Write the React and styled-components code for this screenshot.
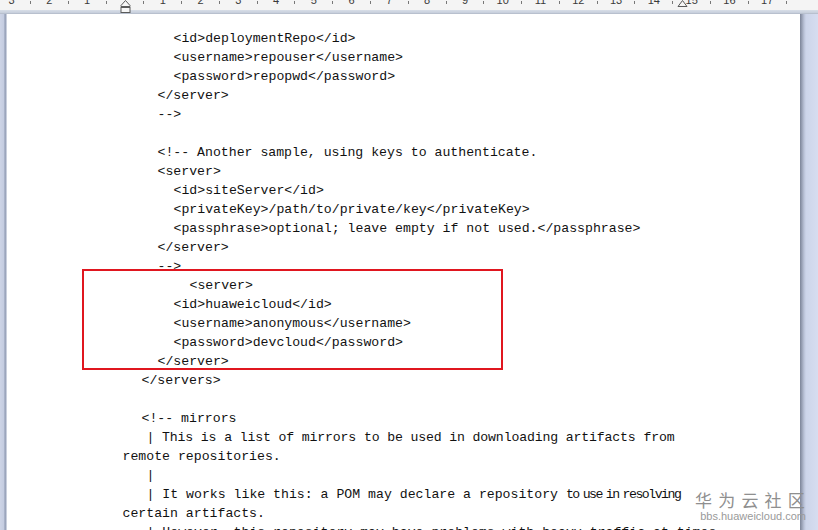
import React from "react";
import styled, { createGlobalStyle } from "styled-components";

const GlobalStyle = createGlobalStyle`
  html, body { margin: 0; padding: 0; background: #d3daec; }
  #root { width: 818px; height: 530px; }
`;

const Window = styled.div`
  position: relative;
  width: 818px;
  height: 530px;
  overflow: hidden;
  display: grid;
  grid-template-rows: 14px 1fr;
  background: #d3daec;
`;

const Ruler = styled.div`
  position: relative;
  display: grid;
  grid-template-rows: 10px 4px;
  background: #f2f2f2;
`;

const NumberRow = styled.div`
  display: flex;
  overflow: hidden;
  padding-left: 2.15px;
  background: #f4f4f4;
`;

const Slot = styled.div`
  flex: 0 0 18.9px;
  display: flex;
  justify-content: center;
  font-family: "Liberation Sans", Arial, sans-serif;
  font-size: 11px;
  line-height: 11px;
  color: #3a3a3a;
  margin-top: -5px;
`;

const Tick = styled.div`
  flex: 0 0 18.9px;
  display: flex;
  justify-content: center;
  padding-top: 1px;
  &::before {
    content: "";
    width: 1px;
    height: 3px;
    background: #777;
  }
`;

const Band = styled.div`
  background: linear-gradient(#d8dee8, #c6cedb);
  border-bottom: 1px solid #b8c0ce;
`;

const Marker = styled.svg`
  position: absolute;
  top: 0;
  left: ${(p) => p.$x}px;
`;

const Body = styled.div`
  display: flex;
  min-height: 0;
`;

const LeftBar = styled.div`
  flex: 0 0 7px;
  background: linear-gradient(90deg, #cdd4e6 0, #c4cce0 4px, #8d98b0 5px, #aab3c8 6px, #e8ebf2 7px);
`;

const RightGutter = styled.div`
  flex: 0 0 18px;
  background: linear-gradient(90deg, #7c8498 0, #9aa2b6 2px, #b9c1d6 4px, #cdd5ea 6px, #d6ddf0 18px);
`;

const Page = styled.div`
  position: relative;
  flex: 1;
  background: #ffffff;
  overflow: hidden;
  padding: 14.5px 0 0 115.5px;
`;

const Line = styled.div`
  height: 19px;
  line-height: 19px;
  white-space: pre;
  padding-left: ${(p) => p.$indent || 0}px;
  font-family: "Liberation Mono", "Courier New", monospace;
  font-size: 13.2px;
  color: #111111;
  letter-spacing: ${(p) => p.$tight || 0}px;
`;

const Squeeze = styled.span`
  letter-spacing: -1.5px;
  word-spacing: -2.5px;
`;

const Highlight = styled.div`
  position: absolute;
  left: 75px;
  top: 255px;
  width: 417px;
  height: 97px;
  border: 2px solid #e0161f;
  pointer-events: none;
`;

const Watermark = styled.div`
  position: absolute;
  right: 12px;
  bottom: 8px;
  display: flex;
  flex-direction: column;
  align-items: flex-end;
  gap: 1px;
  color: #8f8f8f;
  pointer-events: none;
`;

const WatermarkTitle = styled.div`
  font-family: "Noto Sans CJK SC", sans-serif;
  font-size: 17px;
  line-height: 19px;
  letter-spacing: 6.2px;
  margin-right: -5px;
`;

const WatermarkUrl = styled.div`
  font-family: "Liberation Sans", Arial, sans-serif;
  font-size: 11px;
  line-height: 12px;
  color: #9a9a9a;
`;

const lines = [
  { i: 51, t: "<id>deploymentRepo</id>" },
  { i: 51, t: "<username>repouser</username>" },
  { i: 51, t: "<password>repopwd</password>" },
  { i: 35, t: "</server>" },
  { i: 35, t: "-->" },
  { i: 0, t: "" },
  { i: 35, t: "<!-- Another sample, using keys to authenticate." },
  { i: 35, t: "<server>" },
  { i: 51, t: "<id>siteServer</id>" },
  { i: 51, t: "<privateKey>/path/to/private/key</privateKey>" },
  { i: 51, t: "<passphrase>optional; leave empty if not used.</passphrase>" },
  { i: 35, t: "</server>" },
  { i: 35, t: "-->" },
  { i: 67, t: "<server>" },
  { i: 51, t: "<id>huaweicloud</id>" },
  { i: 51, t: "<username>anonymous</username>" },
  { i: 51, t: "<password>devcloud</password>" },
  { i: 35, t: "</server>" },
  { i: 19, t: "</servers>" },
  { i: 0, t: "" },
  { i: 19, t: "<!-- mirrors" },
  { i: 24, t: "| This is a list of mirrors to be used in downloading artifacts from", tight: -0.15 },
  { i: 0, t: "remote repositories." },
  { i: 24, t: "|" },
  { i: 24, t: "| It works like this: a POM may declare a repository ", squeeze: "to use in resolving" },
  { i: 0, t: "certain artifacts." },
  { i: 24, t: "| However, this repository may have problems with heavy traffic at times," },
];

const rulerItems = [];
[3, 2, 1].forEach((n) => {
  rulerItems.push({ k: "n" + -n, n });
  rulerItems.push({ k: "t" + -n, tick: true });
});
rulerItems.push({ k: "zero", n: "" });
for (let n = 1; n <= 17; n++) {
  rulerItems.push({ k: "t" + n, tick: true });
  rulerItems.push({ k: "n" + n, n });
}
rulerItems.push({ k: "tend", tick: true });

export default function App() {
  return (
    <>
      <GlobalStyle />
      <Window>
        <Ruler>
          <NumberRow>
            {rulerItems.map((r) => (r.tick ? <Tick key={r.k} /> : <Slot key={r.k}>{r.n}</Slot>))}
          </NumberRow>
          <Band />
          <Marker $x={120} width="11" height="14" viewBox="0 0 11 14">
            <path d="M1 5.5 L5.5 0.5 L10 5.5 L10 6.5 L1 6.5 Z" fill="#f6f6f6" stroke="#5a5a5a" />
            <rect x="1" y="7.5" width="9" height="5" fill="#f6f6f6" stroke="#5a5a5a" />
          </Marker>
          <Marker $x={677} width="11" height="8" viewBox="0 0 11 8">
            <path d="M1 6.5 L5.5 0.5 L10 6.5 Z" fill="#f6f6f6" stroke="#5a5a5a" />
          </Marker>
        </Ruler>
        <Body>
          <LeftBar />
          <Page>
            {lines.map((l, idx) => (
              <Line key={idx} $indent={l.i} $tight={l.tight}>
                {l.t}
                {l.squeeze && <Squeeze>{l.squeeze}</Squeeze>}
              </Line>
            ))}
            <Highlight />
          </Page>
          <RightGutter />
        </Body>
        <Watermark>
          <WatermarkTitle>华为云社区</WatermarkTitle>
          <WatermarkUrl>bbs.huaweicloud.com</WatermarkUrl>
        </Watermark>
      </Window>
    </>
  );
}
